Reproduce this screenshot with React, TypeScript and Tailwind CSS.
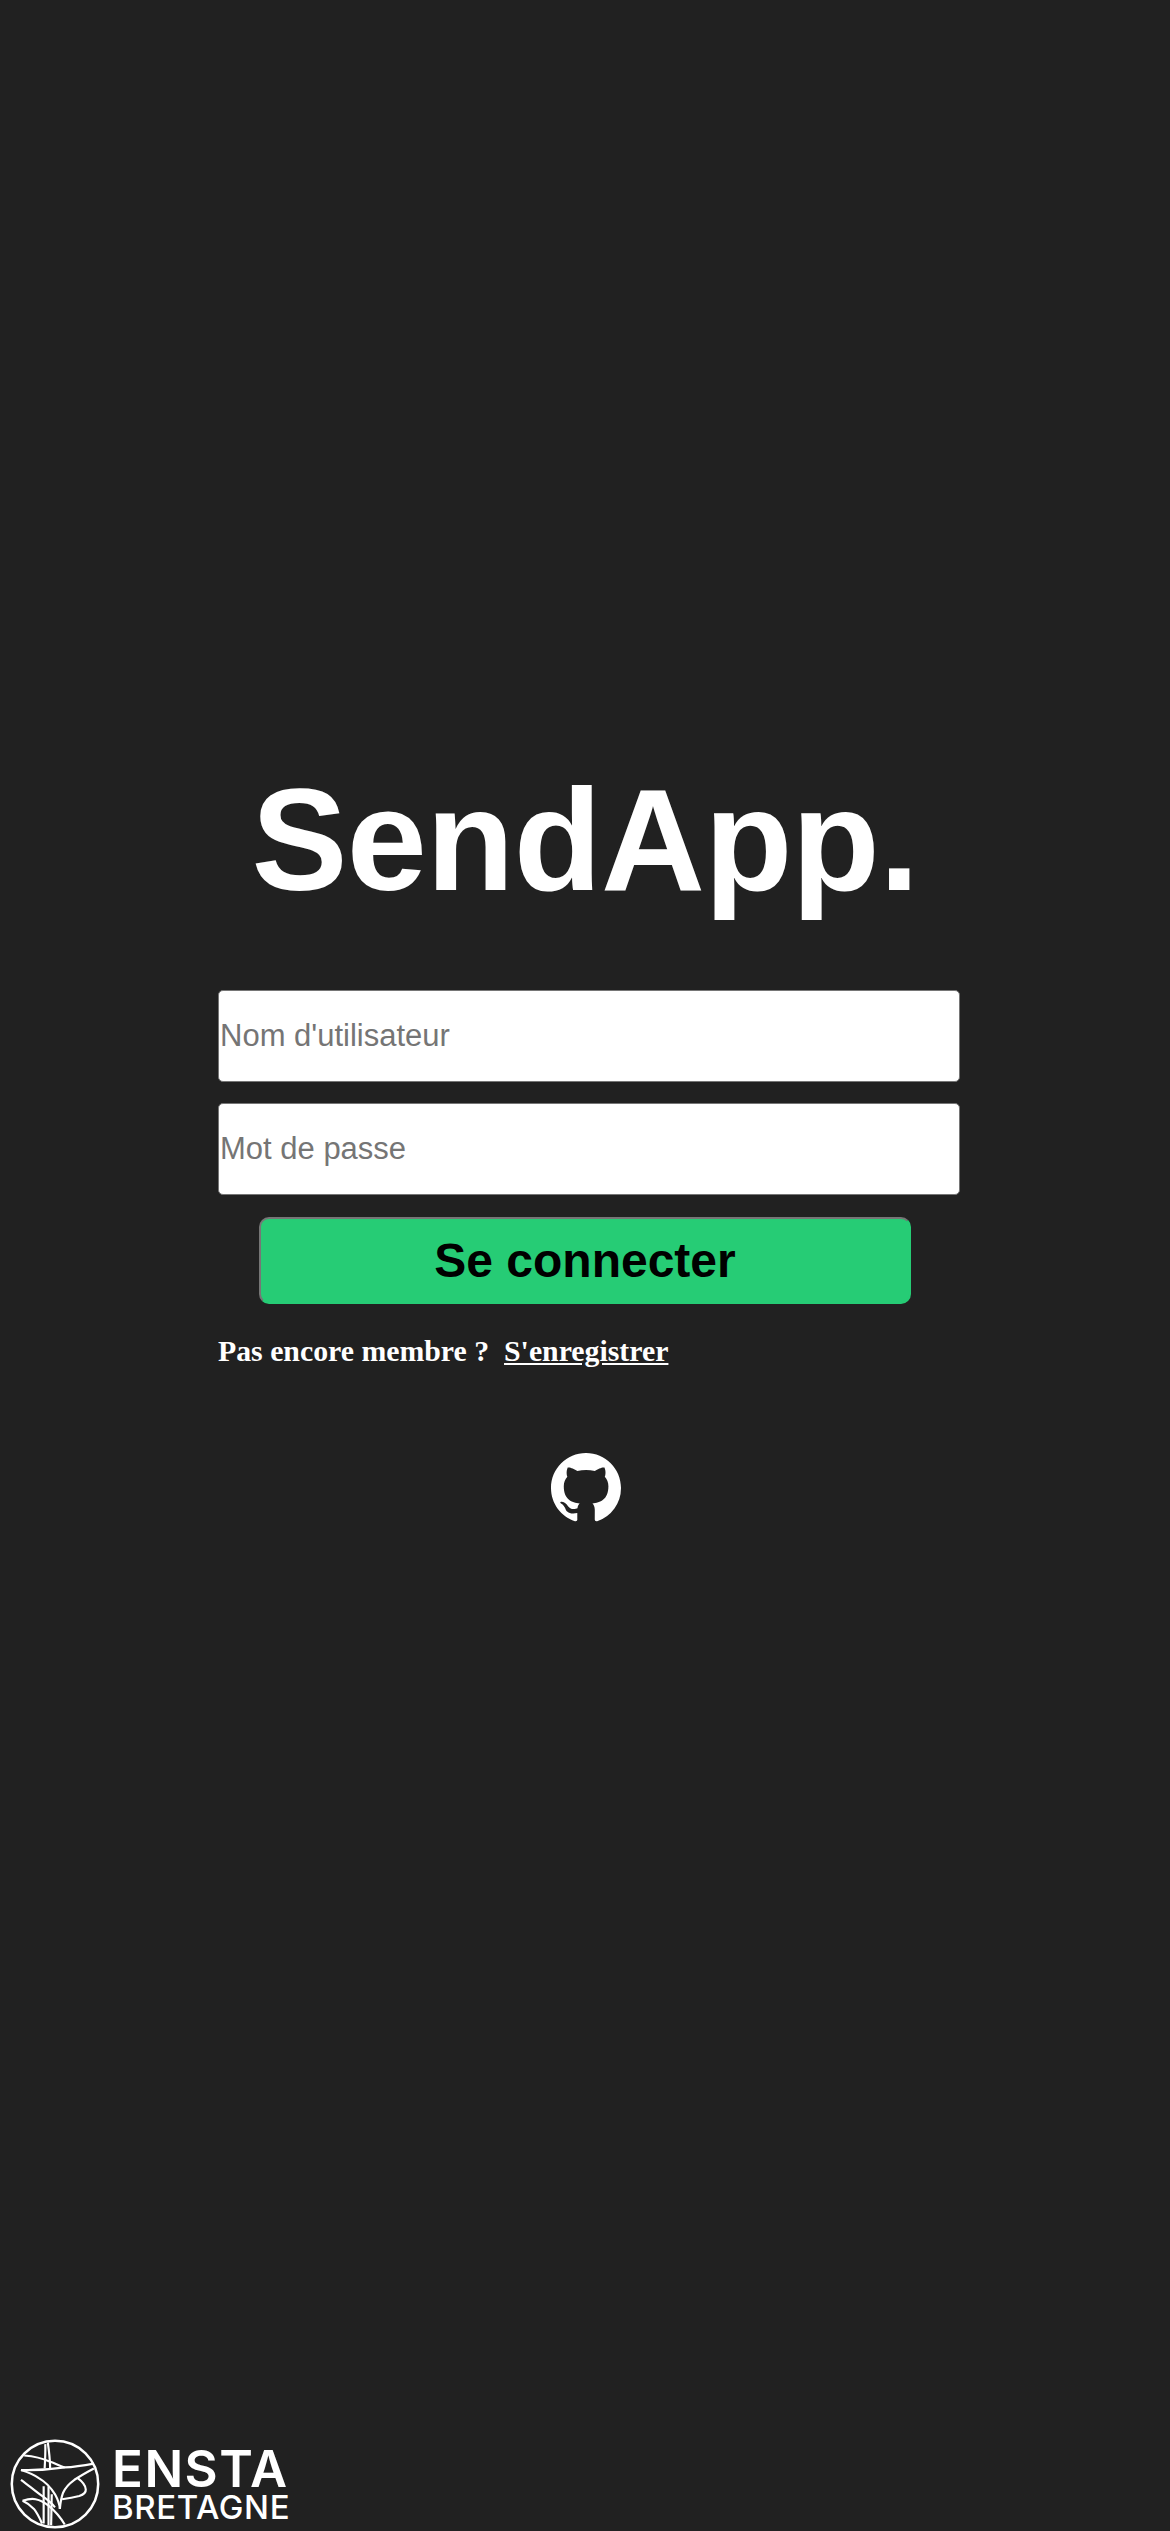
const logoLines = [
  "M15.8 18.3 C24 19 35 21 44 25 C50 27 55 30 60.8 31.6",
  "M12.2 34.5 C30 35 45 34 60.8 31.6 C72 31 84 29 93.2 27.3",
  "M39.2 5.7 C39.5 15 39 24 38.5 32.7",
  "M42 3.9 C43.5 14 44.5 24 44.6 32.7",
  "M12.2 34.5 C20 37 27 40 32 43.5 C40 48 46 55 50 61.5 C53 67 55 72 55.4 77.7",
  "M93.2 32.7 C85 37 78 41 71.6 45.3 C65 50 61 55 59 59.7 C57 65 56 71 55.4 77.7",
  "M75.2 43.5 C80 47 84 52 84.2 56.1 C84.5 60 81 62 77 63.3 C70 65 64 66 57.9 66.9",
  "M12.2 45.3 C20 51 28 58 35.6 63.3 C41 67 46 71 50 75.9",
  "M37.4 52.5 L37.4 93.9",
  "M42.8 52.5 L42.8 95.7",
  "M46.4 61.5 L45.7 95.7",
  "M14 68.7 C19 67 24 66 28.4 66.9 C34 68 39 71 42.8 74.1 C50 80 56 87 60.8 95",
  "M14 68.7 C19 71 23 74 26.6 77.7 C30 82 33 88 35.6 93.9",
];

export default function App() {
  return (
    <div className="relative h-[2531px] overflow-hidden bg-[#212121] font-['Liberation_Sans',Arial,sans-serif]">
      <main className="flex flex-col items-center pt-[758px]">
        <h1 className="text-[144px] leading-[165px] font-bold tracking-[-0.6px] text-white">SendApp.</h1>

        <form className="mt-[67px] flex w-[734px] flex-col items-center">
          <input
            type="text"
            placeholder="Nom d'utilisateur"
            className="h-[92px] w-[742px] shrink-0 self-start rounded-[5px] border border-[#767676] bg-white px-px text-[31px] text-black outline-none placeholder:text-[#757575]"
          />
          <input
            type="password"
            placeholder="Mot de passe"
            className="mt-[21px] h-[92px] w-[742px] shrink-0 self-start rounded-[5px] border border-[#767676] bg-white px-px text-[31px] text-black outline-none placeholder:text-[#757575]"
          />
          <button
            type="button"
            className="mt-[22px] h-[87px] w-[652px] rounded-[10px] border-2 border-[#767676] border-r-[#26cc75] border-b-[#26cc75] bg-[#26cc75] text-5xl font-bold text-black"
          >
            Se connecter
          </button>
          <p className="mt-[30px] self-start font-['Liberation_Serif','Times_New_Roman',serif] text-[29.8px] leading-[34px] font-bold whitespace-pre text-white">
            {"Pas encore membre ?  "}
            <a href="#" className="underline">S'enregistrer</a>
          </p>
        </form>

        <a href="#" className="mt-[85px] ml-0.5 block" aria-label="GitHub">
          <svg viewBox="0 0 16 16" className="h-[70px] w-[70px] fill-white">
            <path d="M8 0C3.58 0 0 3.58 0 8c0 3.54 2.29 6.53 5.47 7.59.4.07.55-.17.55-.38 0-.19-.01-.82-.01-1.49-2.01.37-2.53-.49-2.69-.94-.09-.23-.48-.94-.82-1.13-.28-.15-.68-.52-.01-.53.63-.01 1.08.58 1.23.82.72 1.21 1.87.87 2.33.66.07-.52.28-.87.51-1.07-1.78-.2-3.64-.89-3.64-3.95 0-.87.31-1.59.82-2.15-.08-.2-.36-1.02.08-2.12 0 0 .67-.21 2.2.82.64-.18 1.32-.27 2-.27.68 0 1.36.09 2 .27 1.53-1.04 2.2-.82 2.2-.82.44 1.1.16 1.92.08 2.12.51.56.82 1.27.82 2.15 0 3.07-1.87 3.75-3.65 3.95.29.25.54.73.54 1.48 0 1.07-.01 1.93-.01 2.2 0 .21.15.46.55.38A8.013 8.013 0 0016 8c0-4.42-3.58-8-8-8z" />
          </svg>
        </a>
      </main>

      <footer className="absolute bottom-0 left-0 flex items-center gap-[12px] pb-[2px] pl-[10px] text-white">
        <svg viewBox="0 0 100 100" className="h-[90px] w-[90px]" fill="none" stroke="white" strokeWidth="2.4">
          <circle cx="50" cy="50" r="48" strokeWidth="2.8" />
          {logoLines.map((d) => (
            <path key={d} d={d} />
          ))}
        </svg>
        <div className="flex flex-col font-['Inter',sans-serif]">
          <span className="text-[51px] leading-[46px] font-semibold tracking-[1.5px]">ENSTA</span>
          <span className="text-[33px] leading-[30px] font-medium tracking-[0.6px]">BRETAGNE</span>
        </div>
      </footer>
    </div>
  );
}
